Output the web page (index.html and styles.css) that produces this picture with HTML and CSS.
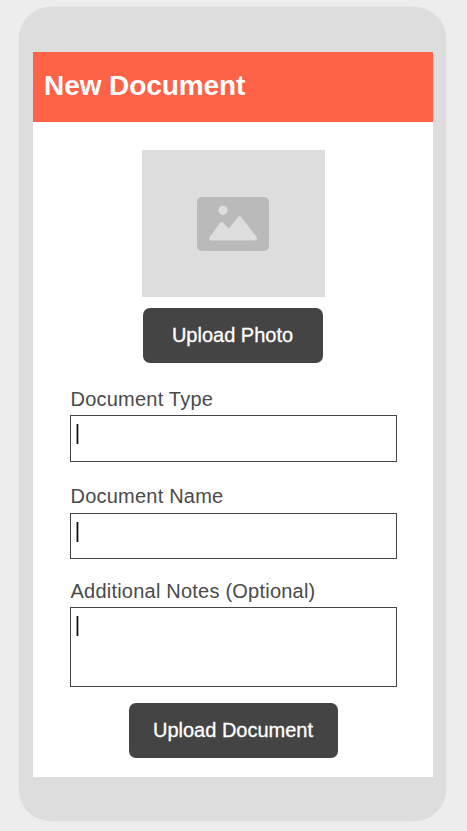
FILE: index.html
```html
<!DOCTYPE html>
<html lang="en">
<head>
<meta charset="utf-8">
<title>New Document</title>
<link rel="stylesheet" href="styles.css">
</head>
<body>
<main class="phone">
  <div class="screen">
    <header class="header"><h1>New Document</h1></header>
    <form class="form">
      <div class="photo">
        <svg width="72" height="54" viewBox="0 0 72 54" aria-hidden="true">
          <rect width="72" height="54" rx="5" fill="#bababa"/>
          <circle cx="26" cy="13.3" r="4.6" fill="#ddd"/>
          <path d="M14 41.5 24.6 27.2 32.2 34.6 42.6 21.2 58.2 41.5Z" fill="#ddd" stroke="#ddd" stroke-width="4" stroke-linejoin="round"/>
        </svg>
      </div>
      <button type="button" class="button button-photo">Upload Photo</button>
      <div class="field field-type">
        <span class="label">Document Type</span>
        <div class="input"><i class="caret"></i></div>
      </div>
      <div class="field field-name">
        <span class="label">Document Name</span>
        <div class="input"><i class="caret"></i></div>
      </div>
      <div class="field field-notes">
        <span class="label">Additional Notes (Optional)</span>
        <div class="input"><i class="caret"></i></div>
      </div>
      <button type="button" class="button button-document">Upload Document</button>
    </form>
  </div>
</main>
</body>
</html>
```
FILE: styles.css
```css
* { box-sizing: border-box; }
body {
  margin: 0;
  height: 831px;
  padding: 7px 0 0 19px;
  overflow: hidden;
  background: #ededed;
  font-family: "Liberation Sans", Arial, sans-serif;
}
.phone {
  width: 427px;
  height: 814px;
  padding: 45px 13px 44px 14px;
  border-radius: 32px;
  background: #ddd;
  box-shadow: 0 0 0 0.5px #e4e4e4;
}
.screen { height: 725px; background: #fff; }
.header {
  display: flex;
  align-items: center;
  height: 70px;
  padding: 0 11px 2px;
  background: #ff6347;
  color: #fff;
}
h1 { margin: 0; font-size: 28px; line-height: 32px; letter-spacing: -0.08px; }
.form {
  display: flex;
  flex-direction: column;
  align-items: center;
  padding-top: 28px;
}
.photo {
  display: flex;
  align-items: center;
  justify-content: center;
  width: 183px;
  height: 147px;
  margin-left: 1px;
  padding-right: 1px;
  background: #ddd;
}
.button {
  height: 55px;
  padding: 0 1px 0 0;
  border: 0;
  border-radius: 7px;
  background: #444;
  color: #fff;
  font: 20px "Liberation Sans", Arial, sans-serif;
  -webkit-text-stroke: 0.3px #fff;
}
.button-photo { width: 180px; margin-top: 11px; }
.button-document { width: 209px; margin: 16px 0 0 1px; }
.field { width: 327px; margin-left: 1px; }
.field-type { margin-top: 25px; }
.field-name { margin-top: 23px; }
.field-notes { margin-top: 21px; }
.label {
  display: block;
  height: 27px;
  padding-left: 0.5px;
  line-height: 23px;
  font-size: 20px;
  letter-spacing: 0.22px;
  color: #4a4a4a;
}
.field-name .label { height: 28px; }
.input {
  height: 47px;
  padding: 8px 5px;
  border: 1px solid #444;
}
.field-name .input { height: 46px; }
.field-notes .input { height: 80px; }
.caret {
  display: block;
  width: 3px;
  height: 20px;
  background: linear-gradient(90deg, #999 1px, #111 1px 2px, #aaa 2px);
}
```
